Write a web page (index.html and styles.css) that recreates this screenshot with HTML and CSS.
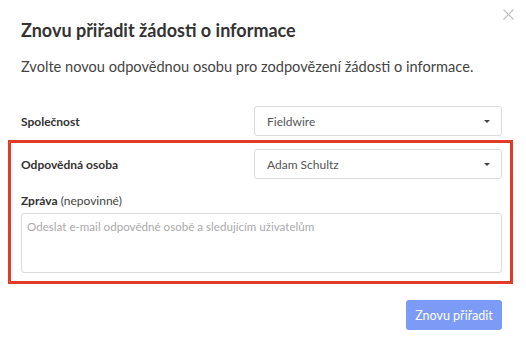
FILE: index.html
```html
<!DOCTYPE html>
<html lang="cs">
<head>
  <meta charset="UTF-8" />
  <title>Znovu přiřadit žádosti o informace</title>
  <link rel="stylesheet" href="styles.css">
</head>
<body>

  <div class="modal">
    <button class="close" type="button" aria-label="Zavřít">
      <svg width="11" height="11" viewBox="0 0 11 11">
        <path d="M0.5 0.5 L10.5 10.5 M10.5 0.5 L0.5 10.5" stroke="#bdbdbd" stroke-width="1.1" fill="none"/>
      </svg>
    </button>

    <h2>Znovu přiřadit žádosti o informace</h2>
    <p class="lead">Zvolte novou odpovědnou osobu pro zodpovězení žádosti o informace.</p>

    <form class="form">
      <div class="row">
        <label>Společnost</label>
        <div class="select">
          <span>Fieldwire</span>
          <i class="caret"></i>
        </div>
      </div>

      <div class="highlight">
        <div class="row">
          <label>Odpovědná osoba</label>
          <div class="select">
            <span>Adam Schultz</span>
            <i class="caret"></i>
          </div>
        </div>

        <div class="message">
          <label><b>Zpráva</b> (nepovinné)</label>
          <textarea placeholder="Odeslat e-mail odpovědné osobě a sledujícím uživatelům"></textarea>
        </div>
      </div>

      <div class="actions">
        <button type="submit" class="primary">Znovu přiřadit</button>
      </div>
    </form>
  </div>

</body>
</html>
```

FILE: styles.css
```css
body {
  margin: 0;
  font-family: Lato, 'Open Sans', sans-serif;
  background-color: #fff;
  color: #333;
}

.modal {
  position: relative;
  width: 526px;
  height: 350px;
  box-sizing: border-box;
  padding: 16px 24px 0 21px;
}

.close {
  position: absolute;
  top: 9px;
  right: 12px;
  padding: 0;
  border: none;
  background: none;
  line-height: 0;
}

h2 {
  margin: 0;
  font-size: 18px;
  line-height: 28px;
  font-weight: 700;
  color: #333;
}

.lead {
  margin: 13px 0 0;
  font-size: 14.6px;
  line-height: 20px;
  color: #444;
}

.form {
  margin-top: 29px;
}

.row {
  display: flex;
  align-items: center;
  height: 30px;
}

.row label {
  flex: 1;
  font-size: 12px;
  font-weight: 700;
  color: #333;
}

.select {
  width: 248px;
  height: 30px;
  box-sizing: border-box;
  border: 1px solid #dcdcdc;
  border-radius: 3px;
  display: flex;
  align-items: center;
  justify-content: space-between;
  padding: 0 11px 0 12px;
  font-size: 12px;
  color: #555;
}

.caret {
  width: 0;
  height: 0;
  border-left: 3px solid transparent;
  border-right: 3px solid transparent;
  border-top: 3px solid #444;
}

.highlight {
  margin: 4px -11px 0 -13px;
  padding: 6px 8px 8px 10px;
  border: 3px solid #e23b28;
}

.message {
  margin-top: 15px;
}

.message label {
  display: block;
  font-size: 12px;
  color: #444;
  line-height: 14px;
}

.message label b {
  color: #333;
}

textarea {
  display: block;
  width: 100%;
  height: 60px;
  margin-top: 5px;
  box-sizing: border-box;
  border: 1px solid #dcdcdc;
  border-radius: 3px;
  padding: 6px 5px;
  font-family: Lato, 'Open Sans', sans-serif;
  font-size: 11.6px;
  resize: none;
}

textarea::placeholder {
  color: #aaa;
}

.actions {
  display: flex;
  justify-content: flex-end;
  margin-top: 16px;
}

.primary {
  width: 96px;
  height: 30px;
  border: none;
  border-radius: 3px;
  background-color: #7b9bf6;
  color: #fff;
  font-family: Lato, 'Open Sans', sans-serif;
  font-size: 12.5px;
  white-space: nowrap;
}
```
